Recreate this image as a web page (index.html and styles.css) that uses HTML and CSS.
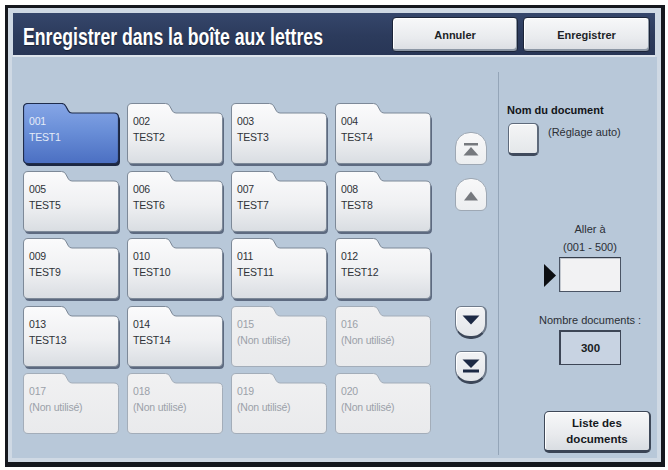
FILE: index.html
```html
<!DOCTYPE html>
<html lang="fr">
<head>
<meta charset="utf-8">
<title>Enregistrer dans la boîte aux lettres</title>
<link rel="stylesheet" href="styles.css">
</head>
<body>
<svg class="defs" width="0" height="0" aria-hidden="true">
  <defs>
    <linearGradient id="g-used" x1="0" y1="0" x2="0" y2="1">
      <stop offset="0" stop-color="#fbfbfc"/>
      <stop offset="0.55" stop-color="#eff0f2"/>
      <stop offset="1" stop-color="#d9dde2"/>
    </linearGradient>
    <linearGradient id="g-sel" x1="0" y1="0" x2="0" y2="1">
      <stop offset="0" stop-color="#86a6e6"/>
      <stop offset="0.45" stop-color="#6a8fd8"/>
      <stop offset="1" stop-color="#4b6fc2"/>
    </linearGradient>
    <linearGradient id="g-empty" x1="0" y1="0" x2="0" y2="1">
      <stop offset="0" stop-color="#f1f1f2"/>
      <stop offset="1" stop-color="#e9eaec"/>
    </linearGradient>
    <path id="folder" d="M5 0.5 H38.5 Q41.5 0.5 42.7 3 L45.3 7.8 Q46.5 10 49 10 H91 Q95.5 10 95.5 14.5 V56 Q95.5 60.5 91 60.5 H5 Q0.5 60.5 0.5 56 V5 Q0.5 0.5 5 0.5 Z"/>
  </defs>
</svg>

<div class="frame">
  <div class="header">
    <div class="title"><span>Enregistrer dans la boîte aux lettres</span></div>
    <div class="hbtn btn-cancel">Annuler</div>
    <div class="hbtn btn-save">Enregistrer</div>
  </div>

  <div class="main">
    <div class="grid">
      <div class="tile sel"><svg class="shape" viewBox="0 0 98 64"><use href="#folder" class="shadow" transform="translate(1.5 2.5)"/><use href="#folder" class="face"/></svg><div class="label"><span>001</span><span>TEST1</span></div></div>
      <div class="tile used"><svg class="shape" viewBox="0 0 98 64"><use href="#folder" class="shadow" transform="translate(1.5 2.5)"/><use href="#folder" class="face"/></svg><div class="label"><span>002</span><span>TEST2</span></div></div>
      <div class="tile used"><svg class="shape" viewBox="0 0 98 64"><use href="#folder" class="shadow" transform="translate(1.5 2.5)"/><use href="#folder" class="face"/></svg><div class="label"><span>003</span><span>TEST3</span></div></div>
      <div class="tile used"><svg class="shape" viewBox="0 0 98 64"><use href="#folder" class="shadow" transform="translate(1.5 2.5)"/><use href="#folder" class="face"/></svg><div class="label"><span>004</span><span>TEST4</span></div></div>

      <div class="tile used"><svg class="shape" viewBox="0 0 98 64"><use href="#folder" class="shadow" transform="translate(1.5 2.5)"/><use href="#folder" class="face"/></svg><div class="label"><span>005</span><span>TEST5</span></div></div>
      <div class="tile used"><svg class="shape" viewBox="0 0 98 64"><use href="#folder" class="shadow" transform="translate(1.5 2.5)"/><use href="#folder" class="face"/></svg><div class="label"><span>006</span><span>TEST6</span></div></div>
      <div class="tile used"><svg class="shape" viewBox="0 0 98 64"><use href="#folder" class="shadow" transform="translate(1.5 2.5)"/><use href="#folder" class="face"/></svg><div class="label"><span>007</span><span>TEST7</span></div></div>
      <div class="tile used"><svg class="shape" viewBox="0 0 98 64"><use href="#folder" class="shadow" transform="translate(1.5 2.5)"/><use href="#folder" class="face"/></svg><div class="label"><span>008</span><span>TEST8</span></div></div>

      <div class="tile used"><svg class="shape" viewBox="0 0 98 64"><use href="#folder" class="shadow" transform="translate(1.5 2.5)"/><use href="#folder" class="face"/></svg><div class="label"><span>009</span><span>TEST9</span></div></div>
      <div class="tile used"><svg class="shape" viewBox="0 0 98 64"><use href="#folder" class="shadow" transform="translate(1.5 2.5)"/><use href="#folder" class="face"/></svg><div class="label"><span>010</span><span>TEST10</span></div></div>
      <div class="tile used"><svg class="shape" viewBox="0 0 98 64"><use href="#folder" class="shadow" transform="translate(1.5 2.5)"/><use href="#folder" class="face"/></svg><div class="label"><span>011</span><span>TEST11</span></div></div>
      <div class="tile used"><svg class="shape" viewBox="0 0 98 64"><use href="#folder" class="shadow" transform="translate(1.5 2.5)"/><use href="#folder" class="face"/></svg><div class="label"><span>012</span><span>TEST12</span></div></div>

      <div class="tile used"><svg class="shape" viewBox="0 0 98 64"><use href="#folder" class="shadow" transform="translate(1.5 2.5)"/><use href="#folder" class="face"/></svg><div class="label"><span>013</span><span>TEST13</span></div></div>
      <div class="tile used"><svg class="shape" viewBox="0 0 98 64"><use href="#folder" class="shadow" transform="translate(1.5 2.5)"/><use href="#folder" class="face"/></svg><div class="label"><span>014</span><span>TEST14</span></div></div>
      <div class="tile empty"><svg class="shape" viewBox="0 0 98 64"><use href="#folder" class="face"/></svg><div class="label"><span>015</span><span>(Non utilisé)</span></div></div>
      <div class="tile empty"><svg class="shape" viewBox="0 0 98 64"><use href="#folder" class="face"/></svg><div class="label"><span>016</span><span>(Non utilisé)</span></div></div>

      <div class="tile empty"><svg class="shape" viewBox="0 0 98 64"><use href="#folder" class="face"/></svg><div class="label"><span>017</span><span>(Non utilisé)</span></div></div>
      <div class="tile empty"><svg class="shape" viewBox="0 0 98 64"><use href="#folder" class="face"/></svg><div class="label"><span>018</span><span>(Non utilisé)</span></div></div>
      <div class="tile empty"><svg class="shape" viewBox="0 0 98 64"><use href="#folder" class="face"/></svg><div class="label"><span>019</span><span>(Non utilisé)</span></div></div>
      <div class="tile empty"><svg class="shape" viewBox="0 0 98 64"><use href="#folder" class="face"/></svg><div class="label"><span>020</span><span>(Non utilisé)</span></div></div>
    </div>

    <div class="scroller">
      <div class="sbtn up first-up">
        <svg width="18" height="13" viewBox="0 0 18 13"><rect x="2" y="0" width="14" height="2.5"/><polygon points="1.5,12.5 9,4 16.5,12.5"/></svg>
      </div>
      <div class="sbtn up step-up">
        <svg width="18" height="10" viewBox="0 0 18 10"><polygon points="2,9.5 9,0.5 16,9.5"/></svg>
      </div>
      <div class="sbtn down step-down">
        <svg width="18" height="10" viewBox="0 0 18 10"><polygon points="0.5,0.5 17.5,0.5 9,9.5"/></svg>
      </div>
      <div class="sbtn down last-down">
        <svg width="18" height="14" viewBox="0 0 18 14"><polygon points="0.5,0.5 17.5,0.5 9,9"/><rect x="1" y="10.5" width="16" height="3"/></svg>
      </div>
    </div>

    <div class="divider"></div>

    <div class="panel">
      <div class="doc-label">Nom du document</div>
      <div class="auto-row">
        <div class="check"></div>
        <div class="auto-text">(Réglage auto)</div>
      </div>

      <div class="center-block">
        <div class="goto-label">Aller à<br>(001 - 500)</div>
        <div class="goto-row">
          <svg class="pointer" width="12" height="23" viewBox="0 0 12 23"><polygon points="0,0 12,11.5 0,23"/></svg>
          <div class="goto-input"></div>
        </div>
        <div class="count-label">Nombre documents :</div>
        <div class="count-box">300</div>
      </div>

      <div class="list-btn">Liste des<br>documents</div>
    </div>
  </div>
</div>
</body>
</html>
```

FILE: styles.css
```css
html, body {
  margin: 0;
  padding: 0;
  background: #ffffff;
}

body {
  font-family: "Liberation Sans", Arial, sans-serif;
  color: #2b2f36;
}

.defs {
  display: block;
  width: 0;
  height: 0;
  overflow: hidden;
}

.frame {
  margin: 5px 0 0 5px;
  width: 660px;
  height: 462px;
  box-sizing: border-box;
  border: 3px solid #15181e;
  border-right-width: 4px;
  border-bottom-width: 5px;
  background: #cfd9e4;
  padding: 4px;
  display: flex;
  flex-direction: column;
}

/* ---------- header ---------- */
.header {
  height: 42px;
  margin: 1px 2px 0 1px;
  background: linear-gradient(#35466b, #2c3b5c 55%, #283656);
  border-bottom: 2px solid #dde4ec;
  display: flex;
  align-items: flex-start;
  flex-shrink: 0;
}

.title {
  flex: 1 1 auto;
  min-width: 0;
  white-space: nowrap;
  padding: 6px 0 0 10px;
  line-height: 36px;
  font-size: 24px;
  font-weight: bold;
  color: #ffffff;
}

.title span {
  display: inline-block;
  transform: scaleX(0.735);
  transform-origin: left center;
  text-shadow: 0 1px 1px rgba(0, 0, 0, 0.4);
}

.hbtn {
  flex-shrink: 0;
  box-sizing: border-box;
  height: 35px;
  margin-top: 4px;
  border: 1px solid #1b2438;
  border-radius: 4px;
  background: linear-gradient(#f7f8f9, #e9ebee 60%, #dadde2);
  box-shadow: inset -1px -2px 0 #8c97a5, inset 1px 1px 0 #ffffff;
  display: flex;
  align-items: center;
  justify-content: center;
  font-size: 11px;
  font-weight: bold;
  color: #1c1f26;
}

.btn-cancel {
  width: 126px;
}

.btn-save {
  width: 127px;
  margin-left: 5px;
  margin-right: 5px;
}

/* ---------- main ---------- */
.main {
  flex: 1;
  display: flex;
  align-items: flex-start;
  background: #b8c8d9;
}

.grid {
  display: grid;
  grid-template-columns: repeat(4, 98px);
  grid-auto-rows: 64px;
  column-gap: 6px;
  row-gap: 3.5px;
  margin: 46px 0 0 11px;
}

.tile {
  display: grid;
}

.tile > * {
  grid-area: 1 / 1;
}

.shape {
  display: block;
  width: 98px;
  height: 64px;
}

.used .shadow {
  fill: #5d6a80;
}

.used .face {
  fill: url(#g-used);
  stroke: #7d8998;
  stroke-width: 1;
}

.sel .shadow {
  fill: #1c2742;
}

.sel .face {
  fill: url(#g-sel);
  stroke: #1f2c4b;
  stroke-width: 1.2;
}

.empty .face {
  fill: url(#g-empty);
  stroke: #a3adb9;
  stroke-width: 1;
}

.label {
  display: flex;
  flex-direction: column;
  padding: 10px 0 0 6px;
  font-size: 10.5px;
  line-height: 16px;
  letter-spacing: -0.2px;
  color: #2e3238;
}

.sel .label {
  color: #e4ebf8;
}

.empty .label {
  color: #9ba1a9;
}

/* ---------- scroll buttons ---------- */
.scroller {
  width: 32px;
  margin-left: 22px;
  display: flex;
  flex-direction: column;
  flex-shrink: 0;
}

.sbtn {
  box-sizing: border-box;
  width: 32px;
  height: 33px;
  display: flex;
  align-items: center;
  justify-content: center;
}

.up {
  border: 1px solid #9ea8b4;
  border-radius: 15px 15px 6px 6px;
  background: linear-gradient(#f8f8f9, #eceef0);
  fill: #76797e;
}

.down {
  border: 1px solid #6f7b8b;
  border-right-width: 2px;
  border-bottom: 3px solid #3c4759;
  border-radius: 6px 6px 15px 15px;
  background: linear-gradient(#f2f3f5, #e3e6ea);
  box-shadow: inset 1px 1px 0 #ffffff;
  fill: #1c2944;
}

.first-up {
  margin-top: 75px;
  padding-top: 2px;
}

.step-up {
  margin-top: 13px;
  padding-top: 3px;
}

.step-down {
  margin-top: 95px;
  padding-bottom: 4px;
}

.last-down {
  margin-top: 12px;
  padding-bottom: 2px;
}

/* ---------- divider ---------- */
.divider {
  align-self: stretch;
  width: 0;
  margin: 15px 0 3px 11px;
  border-left: 1px solid #94a5b8;
}

/* ---------- right panel ---------- */
.panel {
  flex: 1;
  display: flex;
  flex-direction: column;
  padding-left: 8px;
  font-size: 11px;
  color: #2b2f36;
}

.doc-label {
  margin-top: 46px;
  line-height: 14px;
  font-weight: bold;
  color: #121418;
}

.auto-row {
  display: flex;
  align-items: flex-start;
  margin-top: 6px;
}

.check {
  box-sizing: border-box;
  width: 31px;
  height: 33px;
  margin-left: 1px;
  border: 1px solid #5e6a7b;
  border-bottom: 3px solid #3f4a5c;
  border-right-width: 2px;
  border-radius: 5px;
  background: linear-gradient(#f4f5f6, #e4e7ea);
  box-shadow: inset 1px 1px 0 #ffffff;
}

.auto-text {
  margin: 2px 0 0 9px;
  line-height: 14px;
}

.center-block {
  width: 100px;
  margin-left: 33px;
  display: flex;
  flex-direction: column;
  align-items: center;
  text-align: center;
}

.goto-label {
  margin-top: 64px;
  line-height: 18px;
}

.goto-row {
  align-self: stretch;
  display: flex;
  align-items: center;
  padding-left: 4px;
  margin-top: 1px;
}

.pointer {
  display: block;
  fill: #0d0f12;
  margin-right: 3px;
  margin-top: 1px;
}

.goto-input {
  box-sizing: border-box;
  width: 62px;
  height: 35px;
  border: 1px solid #4a5464;
  border-top-color: #353d4a;
  background: #f2f2f3;
  box-shadow: inset 1px 1px 0 #c3c8cf;
}

.count-label {
  margin-top: 21px;
  line-height: 14px;
  white-space: nowrap;
}

.count-box {
  box-sizing: border-box;
  width: 62px;
  height: 35px;
  margin-top: 3px;
  border: 1px solid #3d4656;
  border-width: 2px 1px 1px 2px;
  background: #c8d3e2;
  display: flex;
  align-items: center;
  justify-content: center;
  font-size: 11.5px;
  font-weight: bold;
  color: #1a1d22;
}

.list-btn {
  box-sizing: border-box;
  width: 107px;
  height: 42px;
  margin: 46px 0 0 37px;
  border: 1px solid #3e4858;
  border-right-width: 2px;
  border-bottom: 3px solid #3a4455;
  border-radius: 5px;
  background: linear-gradient(#f7f8f9, #e8eaed 60%, #d9dde2);
  box-shadow: inset 1px 1px 0 #ffffff;
  display: flex;
  align-items: center;
  justify-content: center;
  text-align: center;
  font-size: 11.5px;
  line-height: 16px;
  font-weight: bold;
  color: #15181d;
}
```
